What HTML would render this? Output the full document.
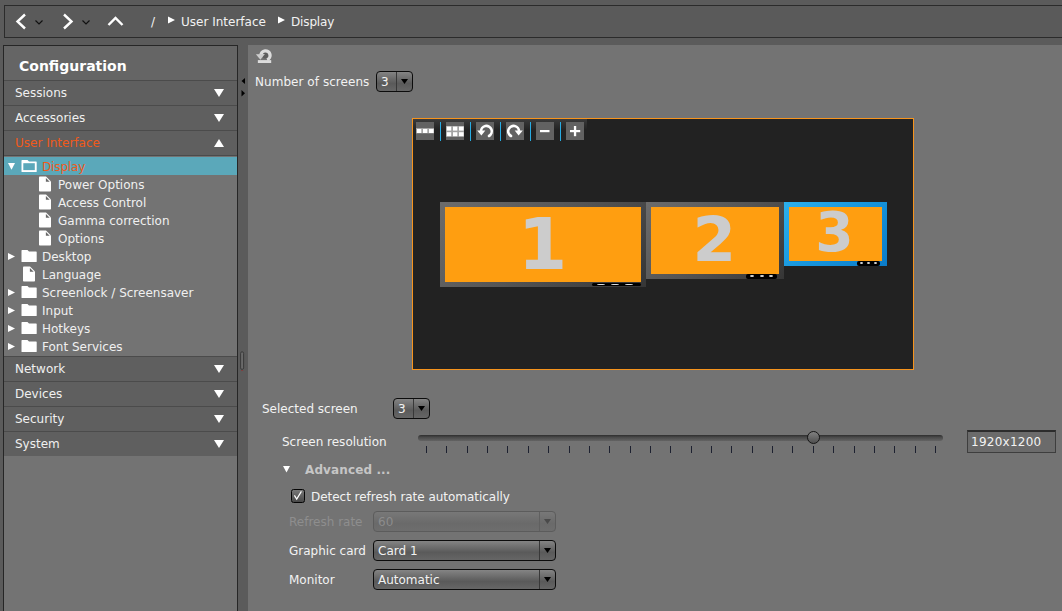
<!DOCTYPE html>
<html><head><meta charset="utf-8"><title>Display</title>
<style>
*{box-sizing:border-box;margin:0;padding:0}
html,body{width:1062px;height:611px;overflow:hidden;background:#5b5b5b;font-family:"DejaVu Sans","Liberation Sans",sans-serif;font-size:12px;color:#f0f0f0}
svg{position:absolute;overflow:visible}
#topbar{position:absolute;left:4px;top:5px;width:1070px;height:33px;border:1px solid #2b2b2b;background:#5a5a5a}
.crumb{position:absolute;top:8px;line-height:16px;white-space:nowrap;color:#f2f2f2}
#side{position:absolute;left:3px;top:45px;width:235px;height:580px;border:1px solid #262626;background:#737373}
#side h1{position:absolute;left:0;top:0;width:233px;height:34px;background:#656565;font-size:14px;font-weight:bold;line-height:16px;padding:12px 0 0 15px;color:#fff}
.sec{position:absolute;left:0;width:233px;height:25px;background:#5f5f5f;border-top:1px solid #4b4b4b;line-height:16px;padding:4px 0 0 11px;color:#f0f0f0}
.sec.on{color:#f05a1a}
.sec i{position:absolute;left:210px;top:8px;width:0;height:0;border-left:5px solid transparent;border-right:5px solid transparent;border-top:8px solid #fff}
.sec i.up{border-top:none;border-bottom:8px solid #fff}
.row{position:absolute;left:0;width:233px;height:18px;line-height:16px;white-space:nowrap;color:#f0f0f0}
.row.sel{background:#5ba8ba;color:#f05a1a}
.row span{position:absolute;top:2px}
#split{position:absolute;left:238px;top:45px;width:10px;height:580px;background:#5b5b5b}
#main{position:absolute;left:248px;top:45px;width:820px;height:580px;background:#737373}
.lbl{position:absolute;margin-top:1px;line-height:16px;white-space:nowrap;color:#f2f2f2}
.combo{position:absolute;height:21px;border:1px solid #0c0c0c;border-radius:4px;background:linear-gradient(#848484 0%,#5a5a5a 60%,#666 100%);line-height:16px;color:#f2f2f2;white-space:nowrap}
.combo span{position:absolute;left:4px;top:2px}
.combo b{position:absolute;right:15px;top:0;width:1px;height:19px;background:#383838}
.combo i{position:absolute;right:4px;top:7px;width:7px;height:5px;background:#000;clip-path:polygon(0 0,100% 0,50% 100%)}
.combo.dis{border-color:#5c5c5c;background:linear-gradient(#787878 0%,#6a6a6a 60%,#6e6e6e 100%);color:#8c8c8c}
.combo.dis b{background:#606060}
.combo.dis i{background:#4a4a4a}
#prev{position:absolute;left:164px;top:73px;width:502px;height:252px;border:1px solid #f7941d;background:#222}
#tb{position:absolute;left:0;top:0;width:174px;height:25px;background:linear-gradient(#3b3b3b 0,#222 11px)}
.btn{position:absolute;top:3px;width:18px;height:18px;background:#626262}
.sepv{position:absolute;top:3px;width:1px;height:19px;background:#29abe2}
.mon{position:absolute;padding:5px;background:linear-gradient(135deg,#6c6c6c 0%,#555 50%,#363636 100%)}
.mon.act{background:linear-gradient(135deg,#2bb0ee 0%,#1795dc 50%,#0b7cc8 100%)}
.mon div{width:100%;height:100%;background:#ff9e10;position:relative}
.mon em{position:absolute;font-style:normal;font-weight:bold;color:#ccc;line-height:1}
.badge{position:absolute;background:#000;border-radius:2px}
.badge u{position:absolute;background:#dcdcdc;border-radius:50%}
</style></head><body>
<div id="topbar">
<svg width="300" height="31" viewBox="0 0 300 31" style="left:0;top:0">
<g fill="none" stroke="#fff" stroke-width="2.4" stroke-linejoin="miter">
<path d="M20 8.5 L12.5 15.5 L20 22.5"/>
<path d="M59 8.5 L66.5 15.5 L59 22.5"/>
<path d="M103.5 19 L110.5 12 L117.5 19"/>
</g>
<g fill="none" stroke="#111" stroke-width="1.2">
<path d="M30.5 14.5 L34 18 L37.5 14.5"/>
<path d="M77.5 14.5 L81 18 L84.5 14.5"/>
</g>
<path fill="#fff" d="M163 10.5 L163 17.5 L170 14 Z"/>
<path fill="#fff" d="M273 10.5 L273 17.5 L280 14 Z"/>
</svg>
<span class="crumb" style="left:146px">/</span>
<span class="crumb" style="left:176px">User Interface</span>
<span class="crumb" style="left:286px;letter-spacing:-.15px">Display</span>
</div>
<div id="side">
<h1>Configuration</h1>
<div class="sec" style="top:34px">Sessions<i></i></div>
<div class="sec" style="top:59px">Accessories<i></i></div>
<div class="sec on" style="top:84px">User Interface<i class="up"></i></div>
<div class="sec" style="top:109px;height:1px;padding:0"></div>
<div class="row sel" style="top:111px"><span style="left:38px;letter-spacing:-.15px">Display</span></div>
<div class="row" style="top:129px"><span style="left:54px">Power Options</span></div>
<div class="row" style="top:147px"><span style="left:54px">Access Control</span></div>
<div class="row" style="top:165px"><span style="left:54px">Gamma correction</span></div>
<div class="row" style="top:183px"><span style="left:54px">Options</span></div>
<div class="row" style="top:201px"><span style="left:38px">Desktop</span></div>
<div class="row" style="top:219px"><span style="left:38px">Language</span></div>
<div class="row" style="top:237px"><span style="left:38px">Screenlock / Screensaver</span></div>
<div class="row" style="top:255px"><span style="left:38px">Input</span></div>
<div class="row" style="top:273px"><span style="left:38px">Hotkeys</span></div>
<div class="row" style="top:291px"><span style="left:38px">Font Services</span></div>
<svg id="treeicons" width="60" height="200" viewBox="0 0 60 200" style="left:0;top:111px">
<defs>
<g id="file"><path fill="#fff" d="M0.8 0 H7 L12 5 V14.2 Q12 15 11.2 15 H0.8 Q0 15 0 14.2 V0.8 Q0 0 0.8 0 Z"/><path fill="#6a6a6a" d="M6.9 1.5 V5.3 H10.7 Z"/></g>
<g id="fold"><path fill="#fff" d="M0.6 0 H6 L7.5 1.5 H14.6 Q15.2 1.5 15.2 2.1 V11.4 Q15.2 12 14.6 12 H0.6 Q0 12 0 11.4 V0.6 Q0 0 0.6 0 Z"/></g>
<path id="tr" fill="#fff" d="M0 0 V7 L7 3.5 Z"/>
</defs>
<path fill="#fff" d="M4 6 H11 L7.5 12.8 Z"/>
<use href="#fold" x="17.5" y="3"/><rect x="19.3" y="6.2" width="11.5" height="6.9" fill="#5ba8ba"/>
<use href="#file" x="35" y="19.5"/><use href="#file" x="35" y="37.5"/><use href="#file" x="35" y="55.5"/><use href="#file" x="35" y="73.5"/>
<use href="#tr" x="4" y="96"/><use href="#fold" x="17.5" y="93"/>
<use href="#file" x="19" y="109.5"/>
<use href="#tr" x="4" y="132"/><use href="#fold" x="17.5" y="129"/>
<use href="#tr" x="4" y="150"/><use href="#fold" x="17.5" y="147"/>
<use href="#tr" x="4" y="168"/><use href="#fold" x="17.5" y="165"/>
<use href="#tr" x="4" y="186"/><use href="#fold" x="17.5" y="183"/>
</svg>
<div class="sec" style="top:310px">Network<i></i></div>
<div class="sec" style="top:335px">Devices<i></i></div>
<div class="sec" style="top:360px">Security<i></i></div>
<div class="sec" style="top:385px">System<i></i></div>
</div>
<div id="split">
<svg width="10" height="400" viewBox="0 0 10 400" style="left:0;top:0">
<path fill="#000" d="M7 33 V39 L3.5 36 Z"/>
<path fill="#000" d="M3.5 45 V51.5 L7 48.2 Z"/>
<rect x="2.6" y="306.8" width="3" height="17.6" rx="1.5" fill="#6a6a6a" stroke="#3a3a3a" stroke-width="1"/><rect x="3.1" y="325" width="2" height="0.8" fill="#8a3a3a"/>
</svg>
</div>
<div id="main">
<svg width="20" height="20" viewBox="0 0 20 20" style="left:6px;top:2px">
<rect x="3.85" y="13.1" width="13.35" height="2.9" fill="#dcdcdc"/>
<circle cx="11.4" cy="8.5" r="3" fill="#5e5e5e"/><path fill="none" stroke="#dcdcdc" stroke-width="3.3" d="M6.9 8.4 A4.6 4.6 0 1 1 13.1 12.7"/>
<path fill="#cdcdcd" d="M1.9 7.2 L10.9 7.0 L6.4 12.7 Z"/>
</svg>
<span class="lbl" style="left:7px;top:28px;letter-spacing:.05px">Number of screens</span>
<div class="combo" style="left:128px;top:26px;width:37px"><span>3</span><b></b><i></i></div>
<div id="prev">
<div id="tb"></div>
<div class="btn" style="left:3px"><svg width="18" height="18" viewBox="0 0 18 18" style="left:0;top:0"><rect x="0" y="6" width="18" height="5.4" fill="#a4a4a4"/><g fill="#fff"><rect x="1" y="7" width="4.3" height="4"/><rect x="7" y="7" width="4.3" height="4"/><rect x="13" y="7" width="4.6" height="4"/></g></svg></div>
<div class="sepv" style="left:27px"></div>
<div class="btn" style="left:33px"><svg width="18" height="18" viewBox="0 0 18 18" style="left:0;top:0"><rect x="0" y="4" width="18" height="10.8" fill="#a4a4a4"/><g fill="#fff"><rect x="0.8" y="4.6" width="4.4" height="4"/><rect x="7" y="4.6" width="4.3" height="4"/><rect x="13" y="4.6" width="4.6" height="4"/><rect x="0.8" y="10.2" width="4.4" height="4"/><rect x="7" y="10.2" width="4.3" height="4"/><rect x="13" y="10.2" width="4.6" height="4"/></g></svg></div>
<div class="sepv" style="left:57px"></div>
<div class="btn" style="left:63px"><svg width="18" height="18" viewBox="0 0 18 18" style="left:0;top:0"><path fill="none" stroke="#fff" stroke-width="2.6" stroke-linecap="round" d="M5 9.6 A5.4 5.4 0 1 1 13 14"/><path fill="#fff" d="M1.2 8.5 L9.3 8.5 L5.4 13.5 Z"/></svg></div>
<div class="sepv" style="left:87px"></div>
<div class="btn" style="left:93px"><svg width="18" height="18" viewBox="0 0 18 18" style="left:0;top:0"><g transform="translate(18,0) scale(-1,1)"><path fill="none" stroke="#fff" stroke-width="2.6" stroke-linecap="round" d="M5 9.6 A5.4 5.4 0 1 1 13 14"/><path fill="#fff" d="M1.2 8.5 L9.3 8.5 L5.4 13.5 Z"/></g></svg></div>
<div class="sepv" style="left:117px"></div>
<div class="btn" style="left:123px"><svg width="18" height="18" viewBox="0 0 18 18" style="left:0;top:0"><rect x="4" y="8" width="9.5" height="2.2" fill="#fff"/></svg></div>
<div class="sepv" style="left:147px"></div>
<div class="btn" style="left:153px"><svg width="18" height="18" viewBox="0 0 18 18" style="left:0;top:0"><rect x="4" y="8" width="10.2" height="2.2" fill="#fff"/><rect x="7.9" y="4" width="2.3" height="10.2" fill="#fff"/></svg></div>
<div class="mon" style="left:27px;top:83px;width:206px;height:85px"><div><em style="font-size:71.2px;left:72.7px;top:2.1px">1</em></div></div>
<div class="mon" style="left:233px;top:83px;width:138px;height:77px"><div><em style="font-size:62.7px;left:41.4px;top:2.3px">2</em></div></div>
<div class="mon act" style="left:371px;top:83px;width:103px;height:64px"><div><em style="font-size:55.2px;left:26.2px;top:-2.3px">3</em></div></div>
<div class="badge" style="left:178.5px;top:163.6px;width:49px;height:3.6px"><u style="left:5px;top:1px;width:8px;height:1.7px"></u><u style="left:19.5px;top:1px;width:8px;height:1.7px"></u><u style="left:33.5px;top:1px;width:8px;height:1.7px"></u></div>
<div class="badge" style="left:333px;top:155px;width:31px;height:4.5px"><u style="left:4px;top:1.2px;width:4px;height:2px"></u><u style="left:13.5px;top:1.2px;width:4px;height:2px"></u><u style="left:23px;top:1.2px;width:4px;height:2px"></u></div>
<div class="badge" style="left:444px;top:142px;width:23px;height:4.5px"><u style="left:3px;top:1.2px;width:3px;height:2px"></u><u style="left:10px;top:1.2px;width:3px;height:2px"></u><u style="left:17px;top:1.2px;width:3px;height:2px"></u></div>
</div>
<span class="lbl" style="left:14px;top:355px">Selected screen</span>
<div class="combo" style="left:145px;top:353px;width:37px"><span>3</span><b></b><i></i></div>
<span class="lbl" style="left:34px;top:388px">Screen resolution</span>
<div style="position:absolute;left:170px;top:390px;width:525px;height:6px;border-radius:3px;background:linear-gradient(#2e2e2e 0%,#4a4a4a 40%,#636363 100%)"></div>
<svg id="ticks" width="560" height="10" viewBox="0 0 560 10" style="left:170px;top:401px"><rect x="8" y="0" width="1" height="7" fill="#1d2130"/><rect x="28" y="0" width="1" height="7" fill="#1d2130"/><rect x="49" y="0" width="1" height="7" fill="#1d2130"/><rect x="69" y="0" width="1" height="7" fill="#1d2130"/><rect x="89" y="0" width="1" height="7" fill="#1d2130"/><rect x="110" y="0" width="1" height="7" fill="#1d2130"/><rect x="130" y="0" width="1" height="7" fill="#1d2130"/><rect x="151" y="0" width="1" height="7" fill="#1d2130"/><rect x="171" y="0" width="1" height="7" fill="#1d2130"/><rect x="191" y="0" width="1" height="7" fill="#1d2130"/><rect x="212" y="0" width="1" height="7" fill="#1d2130"/><rect x="232" y="0" width="1" height="7" fill="#1d2130"/><rect x="252" y="0" width="1" height="7" fill="#1d2130"/><rect x="273" y="0" width="1" height="7" fill="#1d2130"/><rect x="293" y="0" width="1" height="7" fill="#1d2130"/><rect x="313" y="0" width="1" height="7" fill="#1d2130"/><rect x="334" y="0" width="1" height="7" fill="#1d2130"/><rect x="354" y="0" width="1" height="7" fill="#1d2130"/><rect x="374" y="0" width="1" height="7" fill="#1d2130"/><rect x="395" y="0" width="1" height="7" fill="#1d2130"/><rect x="415" y="0" width="1" height="7" fill="#1d2130"/><rect x="436" y="0" width="1" height="7" fill="#1d2130"/><rect x="456" y="0" width="1" height="7" fill="#1d2130"/><rect x="476" y="0" width="1" height="7" fill="#1d2130"/><rect x="497" y="0" width="1" height="7" fill="#1d2130"/><rect x="517" y="0" width="1" height="7" fill="#1d2130"/></svg>
<div style="position:absolute;left:559px;top:386px;width:13px;height:13px;border-radius:50%;border:1px solid #151515;background:linear-gradient(#808080,#505050)"></div>
<div style="position:absolute;left:719px;top:385px;width:89px;height:23px;border:1px solid #3e3e3e;border-top:2px solid #2c2c2c;background:#6b6b6b"><span class="lbl" style="left:3px;top:1px;letter-spacing:.25px">1920x1200</span></div>
<svg width="10" height="10" viewBox="0 0 10 10" style="left:35px;top:421px"><path fill="#fff" d="M0 0 H7 L3.5 6.6 Z"/></svg>
<span class="lbl" style="left:57px;top:416px;font-weight:bold;color:#c6c6c6;letter-spacing:.12px">Advanced ...</span>
<div style="position:absolute;left:43px;top:444px;width:14px;height:14px;border:1.5px solid #050505;border-radius:2.5px;background:linear-gradient(#777,#484848)"><svg width="12" height="12" viewBox="0 0 12 12" style="left:-0.5px;top:-0.5px"><path fill="none" stroke="#fff" stroke-width="1.2" d="M2.4 5.4 L4.7 9 L9.4 1.4"/></svg></div>
<span class="lbl" style="left:63px;top:443px;letter-spacing:-.03px">Detect refresh rate automatically</span>
<span class="lbl" style="left:41px;top:468px;color:#8e8e8e">Refresh rate</span>
<div class="combo dis" style="left:125px;top:466px;width:183px"><span>60</span><b></b><i></i></div>
<span class="lbl" style="left:41px;top:497px">Graphic card</span>
<div class="combo" style="left:125px;top:495px;width:183px"><span>Card 1</span><b></b><i></i></div>
<span class="lbl" style="left:41px;top:526px">Monitor</span>
<div class="combo" style="left:125px;top:524px;width:183px"><span>Automatic</span><b></b><i></i></div>
</div>
</body></html>
